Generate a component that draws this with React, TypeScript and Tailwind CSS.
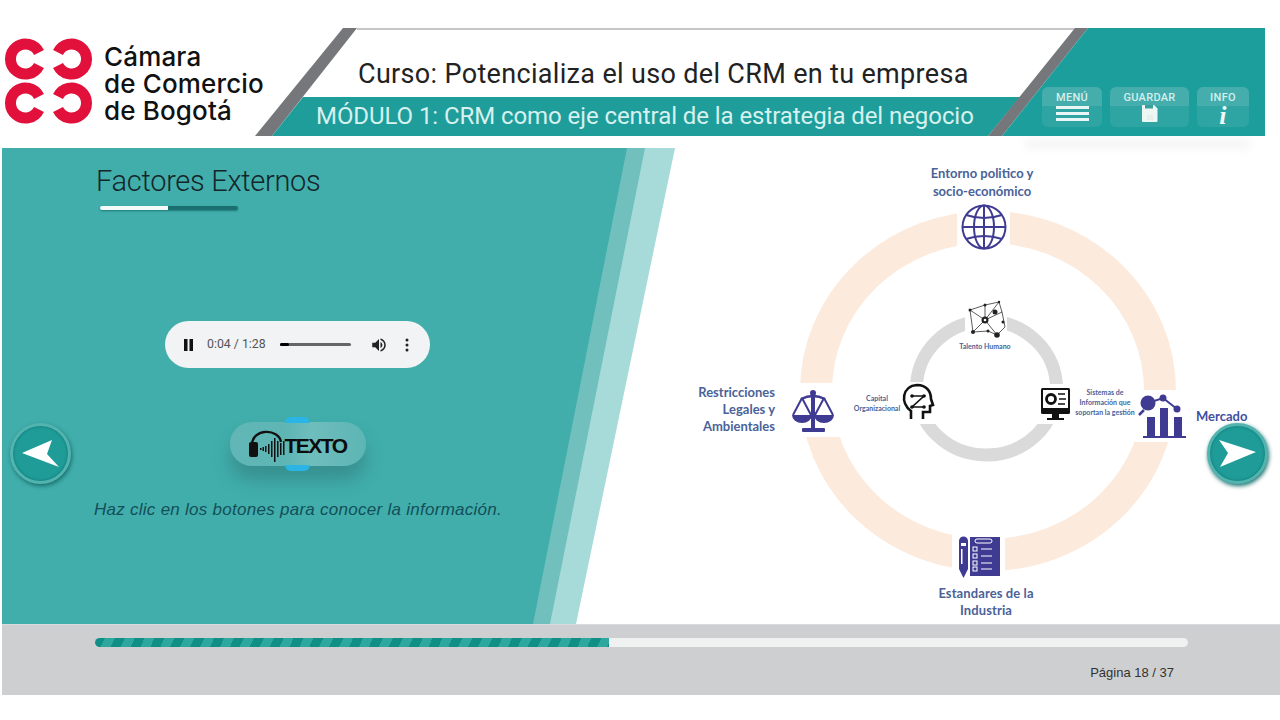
import React from 'react';

const Logo = () => (
  <svg width="100" height="96" viewBox="0 0 100 96" className="shrink-0">
    <g fill="none" stroke="#e1113c" strokeWidth="11">
      {/* four open rings, gaps face the middle */}
      <path d="M37 18.5 A15 15 0 1 0 37 31.5" />
      <path d="M56 18.5 A15 15 0 1 1 56 31.5" />
      <path d="M37 62.5 A15 15 0 1 0 37 75.5" />
      <path d="M56 62.5 A15 15 0 1 1 56 75.5" />
    </g>
  </svg>
);

const Floppy = () => (
  <svg width="16" height="17" viewBox="0 0 16 17">
    <path d="M1 0h11l3.5 3.5V16a1 1 0 0 1-1 1H1a1 1 0 0 1-1-1V1a1 1 0 0 1 1-1z" fill="#eef7f4" />
    <rect x="3" y="0" width="8" height="3.5" fill="#3a9f9d" />
    <rect x="5" y="10" width="6" height="5" fill="#e6efe9" />
  </svg>
);

const Arrow = ({ dir }: { dir: 'left' | 'right' }) => (
  <svg width="38" height="30" viewBox="0 0 38 30" className="block">
    {dir === 'left' ? (
      <polygon points="0,14 30,1 25,15 37,28" fill="#fff" />
    ) : (
      <polygon points="37,13 0,1 9,14 1,28" fill="#fff" />
    )}
  </svg>
);

const NavButton = ({ dir, className }: { dir: 'left' | 'right'; className: string }) => (
  <button
    className={`absolute flex h-[61px] w-[61px] items-center justify-center rounded-full border-[3px] border-[#52b3af] bg-[#1f9c98] shadow-[1px_2px_4px_#176f6c,inset_0_0_3px_#0f6f6c] ${className}`}
  >
    <Arrow dir={dir} />
  </button>
);

const Headphones = () => (
  <svg width="38" height="34" viewBox="0 0 38 34" className="shrink-0">
    <path d="M3 16 C3 -1 30 -1 32 13" fill="none" stroke="#111" strokeWidth="2.4" />
    <rect x="0" y="13" width="9" height="15" rx="2" fill="#111" />
    <g fill="#111">
      <rect x="11" y="19" width="1.5" height="2" />
      <rect x="13.5" y="18" width="1.5" height="4" />
      <rect x="16" y="17" width="1.5" height="6" />
      <rect x="19" y="15" width="1.5" height="10" />
      <rect x="22" y="12" width="1.5" height="16" />
      <rect x="25" y="9" width="1.5" height="24" />
      <rect x="28" y="12" width="1.5" height="16" />
      <rect x="31" y="14" width="1.5" height="12" />
      <rect x="34" y="12" width="1.5" height="14" />
    </g>
  </svg>
);

const AudioPlayer = () => (
  <div className="mr-[1px] flex h-[47px] w-[265px] items-center rounded-full bg-[#f1f3f4] pl-[18px] text-[12.3px] text-[#555]">
    <svg width="11" height="12" viewBox="0 0 11 12" className="shrink-0">
      <rect x="1" y="0" width="3.5" height="12" fill="#111" />
      <rect x="6.5" y="0" width="3.5" height="12" fill="#111" />
    </svg>
    <span className="ml-[13px] w-[60px] whitespace-nowrap">0:04 / 1:28</span>
    <div className="ml-[13px] h-[3px] w-[71px] rounded-full bg-[#666]">
      <div className="h-[3px] w-[9px] rounded-full bg-[#000]" />
    </div>
    <svg width="18" height="18" viewBox="0 0 24 24" className="ml-[19px] shrink-0">
      <path d="M3 9v6h4l5 5V4L7 9H3zm13.5 3c0-1.77-1.02-3.29-2.5-4.03v8.05c1.48-.73 2.5-2.25 2.5-4.02zM14 3.23v2.06c2.89.86 5 3.54 5 6.71s-2.11 5.85-5 6.71v2.06c4.01-.91 7-4.49 7-8.77s-2.99-7.86-7-8.77z" fill="#222" />
    </svg>
    <svg width="4" height="14" viewBox="0 0 4 14" className="ml-[17px] shrink-0">
      <circle cx="2" cy="2" r="1.5" fill="#222" />
      <circle cx="2" cy="7" r="1.5" fill="#222" />
      <circle cx="2" cy="12" r="1.5" fill="#222" />
    </svg>
  </div>
);

// outer and inner rings plus all the icons, coordinates are page pixels
const DiagramArt = () => (
  <svg width="605" height="476" viewBox="675 148 605 476" className="absolute inset-0">
    <ellipse cx="988" cy="391" rx="172" ry="164" fill="none" stroke="#fcebdd" strokeWidth="32" />
    <ellipse cx="986.5" cy="388" rx="70" ry="67" fill="none" stroke="#dadada" strokeWidth="13" />
    <g fill="#fff">
      <rect x="957" y="200" width="53" height="56" />
      <rect x="787" y="383" width="53" height="54" />
      <rect x="1135" y="390" width="55" height="52" />
      <rect x="952" y="530" width="53" height="56" />
      <rect x="965" y="298" width="42" height="44" />
      <rect x="898" y="382" width="40" height="42" />
      <rect x="1036" y="384" width="38" height="40" />
    </g>

    {/* globe */}
    <g fill="none" stroke="#3f3b92" strokeWidth="2">
      <circle cx="984" cy="227" r="21.5" />
      <ellipse cx="984" cy="227" rx="10" ry="21.5" />
      <line x1="984" y1="205.5" x2="984" y2="248.5" />
      <line x1="962.5" y1="227" x2="1005.5" y2="227" />
      <path d="M966 215 Q984 221 1002 215" />
      <path d="M966 239 Q984 233 1002 239" />
    </g>

    {/* scales */}
    <g fill="#3f3b92">
      <circle cx="813" cy="393" r="3" />
      <rect x="811" y="394" width="4" height="34" />
      <rect x="802" y="428" width="23" height="4" rx="1" />
      <path d="M801 399 Q813 393 825 399" stroke="#3f3b92" strokeWidth="2.4" fill="none" />
      <path d="M792 415h20a10 8 0 0 1-20 0z" />
      <path d="M814 415h20a10 8 0 0 1-20 0z" />
      <path d="M802 398 L793 415 M802 398 L811 415 M824 398 L815 415 M824 398 L833 415" stroke="#3f3b92" strokeWidth="2" fill="none" />
    </g>

    {/* market chart */}
    <g fill="#3f3b92">
      <rect x="1147" y="417" width="8" height="19" />
      <rect x="1160" y="408" width="8" height="28" />
      <rect x="1174" y="417" width="8" height="19" />
      <rect x="1143" y="436" width="43" height="2" />
      <circle cx="1148" cy="403" r="7.5" />
      <path d="M1144 410 L1139 415" stroke="#3f3b92" strokeWidth="2.5" />
      <circle cx="1163" cy="398" r="3.5" />
      <circle cx="1177" cy="409" r="3.5" />
      <path d="M1148 403 L1163 398 L1177 409" stroke="#3f3b92" strokeWidth="2" fill="none" />
    </g>

    {/* checklist and pen */}
    <g>
      <rect x="970" y="537" width="30" height="39" fill="#3f3b92" />
      <rect x="975" y="539" width="17" height="4" rx="2" fill="none" stroke="#fff" strokeWidth="1" />
      <g fill="none" stroke="#fff" strokeWidth="1">
        <rect x="973" y="547" width="4" height="4" />
        <rect x="973" y="554" width="4" height="4" />
        <rect x="973" y="561" width="4" height="4" />
        <rect x="973" y="567" width="4" height="4" />
        <path d="M981 549h11M981 556h11M981 563h11M981 569h11" />
      </g>
      <path d="M959 541a4.5 4.5 0 0 1 9 0v28l-4.5 9-4.5-9z" fill="#3f3b92" />
      <rect x="961" y="543" width="5" height="3" fill="#fff" />
      <rect x="961" y="549" width="1.5" height="15" fill="#fff" />
    </g>

    {/* talent network */}
    <g stroke="#333" strokeWidth="0.8" fill="none">
      <path d="M970 310 L985 305 L999 302 L1002 312 L1005 327 L997 335 L988 331 L973 332 L970 310 M985 305 L985 320 L970 310 M985 320 L1002 312 M985 320 L997 335 M985 320 L973 332 M999 302 L985 320" />
    </g>
    <g fill="#222">
      <circle cx="985" cy="320" r="3.5" />
      <circle cx="995" cy="312" r="2.5" />
      <circle cx="997" cy="335" r="2.8" />
      <circle cx="973" cy="332" r="2" />
      <circle cx="970" cy="310" r="1.5" />
      <circle cx="985" cy="305" r="1.5" />
      <circle cx="999" cy="302" r="1.2" />
      <circle cx="1003" cy="322" r="1.5" />
      <circle cx="988" cy="331" r="1.5" />
    </g>
    <circle cx="985" cy="320" r="1.3" fill="#fff" />

    {/* head */}
    <g fill="none" stroke="#111" strokeWidth="2.6">
      <path d="M911 419 V411 C900 403 902 386 917 385 C927 385 931 392 931 399 L933 405 L930 406 V412 H923 V419" />
      <path d="M912 396 H924 L912 407 H924" strokeWidth="1.6" />
    </g>
    <g fill="#111">
      <circle cx="912" cy="396" r="1.8" />
      <circle cx="924" cy="396" r="1.8" />
      <circle cx="912" cy="407" r="1.8" />
      <circle cx="924" cy="407" r="1.8" />
    </g>

    {/* monitor */}
    <g>
      <rect x="1041" y="388" width="29" height="26" rx="1.5" fill="#111" />
      <rect x="1043" y="390" width="25" height="18" fill="#fff" />
      <circle cx="1051" cy="399" r="4.5" fill="none" stroke="#111" strokeWidth="2.8" />
      <path d="M1058 394h7M1059 399h7M1058 404h7" stroke="#111" strokeWidth="1.6" />
      <rect x="1052" y="414" width="7" height="4" fill="#111" />
      <rect x="1047" y="418" width="17" height="2" fill="#111" />
    </g>
  </svg>
);

const App = () => {
  return (
    <div className="flex h-[720px] w-[1280px] flex-col overflow-hidden bg-white pt-[28px] font-['Roboto',sans-serif]">
      {/* Header */}
      <header className="flex h-[108px] shrink-0">
        <div className="flex w-[255px] shrink-0 items-center pl-[2px]">
          <Logo />
          <div className="ml-[2px] whitespace-nowrap pt-[3px] font-['Inter',sans-serif] text-[26px] font-medium leading-[27px] tracking-[0.15px] text-[#111]">
            Cámara
            <br />
            de Comercio
            <br />
            de Bogotá
          </div>
        </div>

        <div className="relative h-[108px] w-[1010px]">
          {/* soft shadow below the banner, has to sit under the teal shape */}
          <div className="absolute left-[770px] top-[112px] h-[12px] w-[225px] bg-gradient-to-b from-[#efefef] to-white blur-[4px]" />
          {/* slanted banner shapes */}
          <div className="absolute left-[102px] top-0 h-[2px] w-[718px] bg-[#c6c6c6]" />
          <div className="absolute inset-0 bg-[#76777a] [clip-path:polygon(88px_0,102px_0,17px_108px,0_108px)]" />
          <div className="absolute inset-0 bg-[#1f9d9b] [clip-path:polygon(48px_69px,765px_69px,733px_108px,17px_108px)]" />
          <div className="absolute inset-0 bg-[#76777a] [clip-path:polygon(820px_0,833px_0,747px_108px,733px_108px)]" />
          <div className="absolute inset-0 bg-[#1c9e9c] [clip-path:polygon(833px_0,1010px_0,1010px_108px,747px_108px)]" />

          <div className="relative flex h-full">
            <div className="w-[787px] shrink-0">
              <div className="flex h-[69px] items-center whitespace-nowrap pl-[103px] pt-[24px] text-[27px] leading-none tracking-[0.33px] text-[#222]">
                Curso: Potencializa el uso del CRM en tu empresa
              </div>
              <div className="flex h-[37px] items-center whitespace-nowrap pl-[61px] text-[24px] leading-none tracking-[-0.07px] text-[#d6f1ee]">
                MÓDULO 1: CRM como eje central de la estrategia del negocio
              </div>
            </div>
            <div className="flex gap-2 pt-[59px] text-[11px] font-medium leading-none tracking-[0.3px] text-[#d5efed]">
              <div className="flex h-[40px] w-[60px] flex-col items-center rounded-md bg-[linear-gradient(#45adac_0,#45adac_48%,#2fa5a3_48%,#2fa5a3_100%)] pt-[5px]">
                <span>MENÚ</span>
                <div className="mt-[3px] flex w-[33px] flex-col gap-[3px]">
                  <div className="h-[3px] bg-[#e8f7f5]" />
                  <div className="h-[3px] bg-[#e8f7f5]" />
                  <div className="h-[3px] bg-[#e8f7f5]" />
                </div>
              </div>
              <div className="flex h-[40px] w-[79px] flex-col items-center rounded-md bg-[linear-gradient(#45adac_0,#45adac_48%,#2fa5a3_48%,#2fa5a3_100%)] pt-[5px]">
                <span>GUARDAR</span>
                <div className="mt-[2px]">
                  <Floppy />
                </div>
              </div>
              <div className="flex h-[40px] w-[52px] flex-col items-center rounded-md bg-[linear-gradient(#45adac_0,#45adac_48%,#2fa5a3_48%,#2fa5a3_100%)] pt-[5px]">
                <span>INFO</span>
                <span className="mt-[2px] font-['Liberation_Serif',serif] text-[26px] font-bold italic leading-[22px] text-[#eef8f6]">i</span>
              </div>
            </div>
          </div>
        </div>
      </header>

      {/* Slide */}
      <main className="relative mt-[12px] ml-[2px] flex h-[476px] shrink-0">
        <div className="absolute inset-0 bg-[#a6dbd9] [clip-path:polygon(0_0,673px_0,574px_476px,0_476px)]" />
        <div className="absolute inset-0 bg-[#71c0bd] [clip-path:polygon(0_0,643px_0,548px_476px,0_476px)]" />
        <div className="absolute inset-0 bg-[#41aeac] [clip-path:polygon(0_0,625px_0,531px_476px,0_476px)]" />

        <section className="relative ml-[92px] flex h-full w-[408px] shrink-0 flex-col items-center">
          <div className="mt-[13px] flex w-full flex-col pl-[2px]">
            <h1 className="h-[40px] whitespace-nowrap text-[29px] font-light leading-[40px] tracking-[-0.3px] text-[#15262a]">Factores Externos</h1>
            <div className="ml-[4px] mt-[5px] flex h-[4px] w-[138px] overflow-hidden rounded-full shadow-[0_1px_2px_#1f7a78]">
              <div className="w-[68px] bg-[#f4fbfa]" />
              <div className="flex-1 bg-[#1c6f70]" />
            </div>
          </div>

          <div className="mt-[111px]">
            <AudioPlayer />
          </div>

          <div className="relative mt-[54px] flex h-[44px] w-[136px] items-center justify-center rounded-full bg-[linear-gradient(90deg,#62b6b6,#5db5b4_40%,#6fbdbd_60%,#5cb5b4)] shadow-[0_14px_18px_#37908f]">
            <div className="absolute left-[55px] top-[-5px] h-[6px] w-[25px] rounded-t-md bg-[#2ab5e6]" />
            <div className="absolute bottom-[-5px] left-[55px] h-[6px] w-[25px] rounded-b-md bg-[#2ab5e6]" />
            <div className="relative flex items-center pt-[3px]">
              <Headphones />
              <span className="-ml-[3px] font-['Liberation_Sans',sans-serif] text-[21px] font-bold tracking-[-1.5px] text-[#0c0c0c]">TEXTO</span>
            </div>
          </div>

          <p className="mt-[34px] whitespace-nowrap font-['Liberation_Sans',sans-serif] text-[17px] italic leading-[20px] tracking-[0.27px] text-[#134f58]">
            Haz clic en los botones para conocer la información.
          </p>
        </section>

        {/* Diagram canvas */}
        <section className="absolute left-[673px] top-0 h-[476px] w-[605px] font-['Lato',sans-serif] font-bold text-[#4a6298]">
          <DiagramArt />
          <div className="absolute left-[207px] top-[16px] w-[200px] text-center text-[13px] leading-[18px]">
            Entorno politico y
            <br />
            socio-económico
          </div>
          <div className="absolute left-[0px] top-[236px] w-[100px] text-right text-[13px] leading-[17px]">
            Restricciones
            <br />
            Legales y
            <br />
            Ambientales
          </div>
          <div className="absolute left-[521px] top-[260px] text-[13px] leading-[16px] text-[#40509f]">Mercado</div>
          <div className="absolute left-[211px] top-[437px] w-[200px] text-center text-[13px] leading-[17px] tracking-[0.1px]">
            Estandares de la
            <br />
            Industria
          </div>
          <div className="absolute left-[260px] top-[194px] w-[100px] text-center text-[7px] leading-[8px]">Talento Humano</div>
          <div className="absolute left-[167px] top-[245px] w-[70px] text-center text-[7px] leading-[10px]">
            Capital
            <br />
            Organizacional
          </div>
          <div className="absolute left-[390px] top-[239px] w-[80px] text-center text-[7px] leading-[10px]">
            Sistemas de
            <br />
            Información que
            <br />
            soportan la gestión
          </div>
        </section>

        <NavButton dir="left" className="left-[8px] top-[275px]" />
        <NavButton dir="right" className="left-[1205px] top-[275px]" />
      </main>

      {/* Footer */}
      <footer className="ml-[2px] flex h-[71px] shrink-0 flex-col border-t border-[#d9dbe0] bg-[#cdcfd0] pl-[93px] pr-[92px] pt-[13px]">
        <div className="h-[9px] w-[1093px] overflow-hidden rounded-full bg-[#f0f1f1]">
          <div className="h-full w-[514px] bg-[repeating-linear-gradient(115deg,#0f8f86_0,#0f8f86_9px,#2ea79f_9px,#2ea79f_18px)]" />
        </div>
        <div className="mt-[18px] w-[1079px] text-right font-['Liberation_Sans',sans-serif] text-[13px] leading-[16px] text-[#333]">Página 18 / 37</div>
      </footer>
    </div>
  );
};

export default App;
